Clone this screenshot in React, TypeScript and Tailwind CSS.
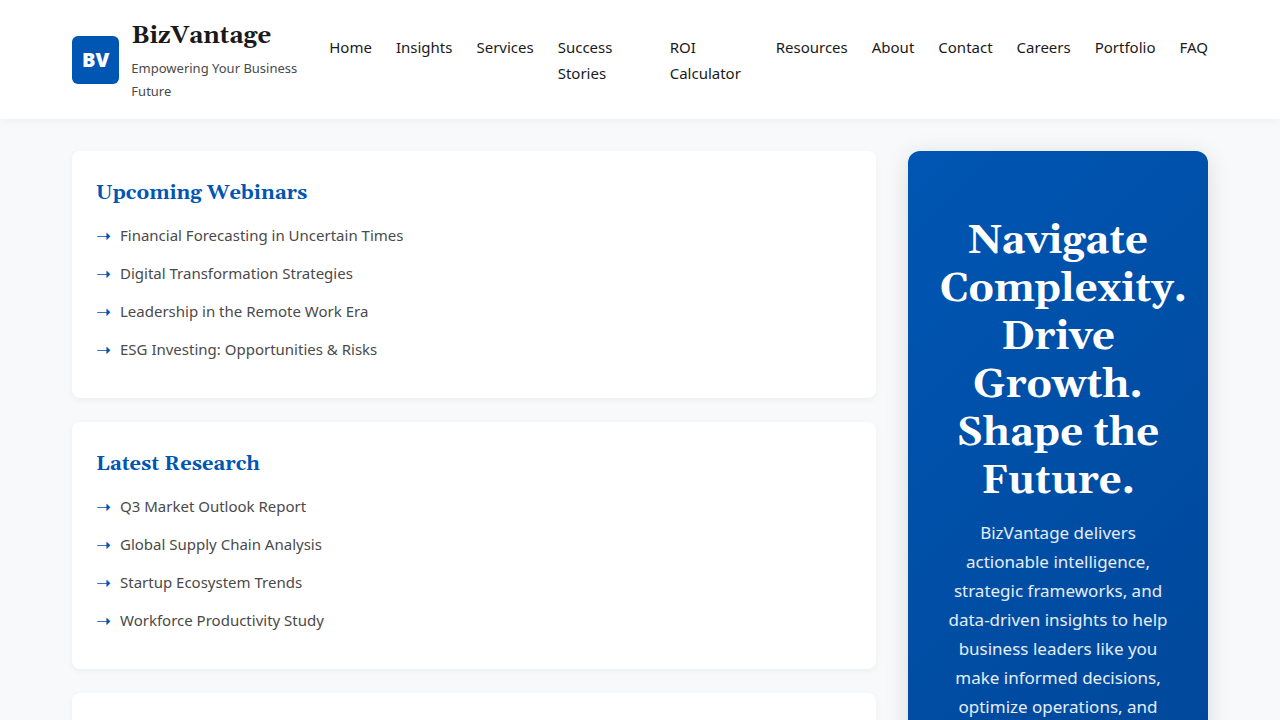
interface NavItem {
  label: string;
  className?: string;
}

const navItems: NavItem[] = [
  { label: 'Home' },
  { label: 'Insights' },
  { label: 'Services' },
  { label: 'Success Stories', className: 'w-[88px]' },
  { label: 'ROI Calculator', className: 'w-[82px]' },
  { label: 'Resources' },
  { label: 'About' },
  { label: 'Contact' },
  { label: 'Careers' },
  { label: 'Portfolio' },
  { label: 'FAQ' },
];

const webinars = [
  'Financial Forecasting in Uncertain Times',
  'Digital Transformation Strategies',
  'Leadership in the Remote Work Era',
  'ESG Investing: Opportunities & Risks',
];

const research = [
  'Q3 Market Outlook Report',
  'Global Supply Chain Analysis',
  'Startup Ecosystem Trends',
  'Workforce Productivity Study',
];

function Header() {
  return (
    <header className="relative bg-white shadow-[0_2px_8px_rgba(0,0,0,0.05)]">
      <div className="mx-auto flex max-w-[1200px] items-center justify-between gap-6 px-8 py-4">
        <div className="flex min-w-0 items-center gap-3">
          <div className="shrink-0 rounded-md bg-[#0056b3] px-[10px] py-2 font-['Open_Sans',sans-serif] text-[20px] leading-8 font-extrabold text-white">
            BV
          </div>
          <div>
            <h1 className="font-[Gelasio,serif] text-[24px] leading-[41px] font-bold">BizVantage</h1>
            <p className="text-[13px] leading-[23px] text-[#4a4a4a]">Empowering Your Business Future</p>
          </div>
        </div>
        <nav className="shrink-0">
          <ul className="flex gap-6">
            {navItems.map((item) => (
              <li key={item.label} className={item.className}>
                <a href="#" className="hover:text-[#0056b3]">
                  {item.label}
                </a>
              </li>
            ))}
          </ul>
        </nav>
      </div>
    </header>
  );
}

function LinkCard({ title, items }: { title: string; items: string[] }) {
  return (
    <section className="rounded-lg bg-white px-6 pt-6 pb-9 shadow-[0_2px_6px_rgba(0,0,0,0.05)]">
      <h2 className="mb-[11px] font-[Gelasio,serif] text-[20px] leading-9 font-bold text-[#0056b3]">{title}</h2>
      <ul className="flex flex-col gap-3">
        {items.map((item) => (
          <li key={item} className="flex">
            <span aria-hidden="true" className="w-6 text-[18px] text-[#0056b3]">
              ➝
            </span>
            <a href="#" className="text-[#4a4a4a]">
              {item}
            </a>
          </li>
        ))}
      </ul>
    </section>
  );
}

function Hero() {
  return (
    <section className="min-h-[814px] rounded-xl bg-[linear-gradient(135deg,#0056b3,#004494)] px-8 pt-[67px] pb-16 text-center text-white shadow-[0_4px_24px_rgba(0,0,0,0.12)]">
      <h2 className="mb-3 font-[Gelasio,serif] text-[40px] leading-[48px] font-bold">
        Navigate Complexity. Drive Growth. Shape the Future.
      </h2>
      <p className="text-[17px] leading-[29px] text-white/90">
        BizVantage delivers actionable intelligence, strategic frameworks, and data-driven insights to help
        business leaders like you make informed decisions, optimize operations, and
      </p>
    </section>
  );
}

export default function App() {
  return (
    <div className="min-h-screen bg-[#f8f9fb] font-['Noto_Sans',sans-serif] text-[15px] leading-[26px] text-[#1a1a1a]">
      <Header />
      <main className="mx-auto grid max-w-[1200px] grid-cols-[minmax(0,1fr)_300px] gap-8 px-8 py-8">
        <div className="flex flex-col gap-6">
          <LinkCard title="Upcoming Webinars" items={webinars} />
          <LinkCard title="Latest Research" items={research} />
          <section className="flex-1 rounded-lg bg-white shadow-[0_2px_6px_rgba(0,0,0,0.05)]" />
        </div>
        <Hero />
      </main>
    </div>
  );
}
